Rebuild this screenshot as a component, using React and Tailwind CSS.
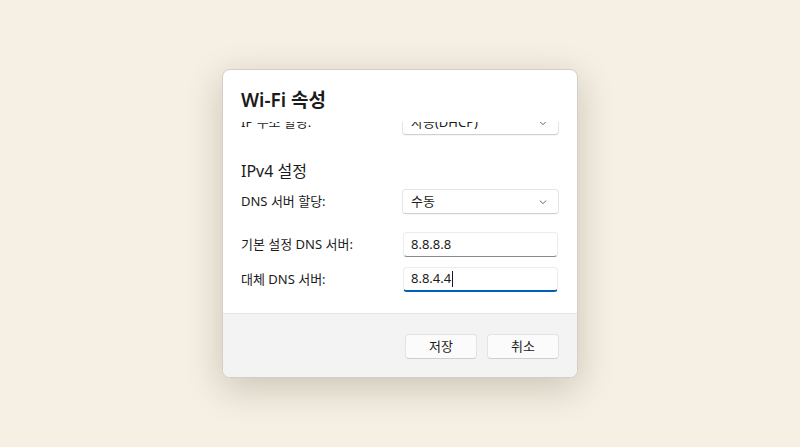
import React from "react";

const font = { fontFamily: '"Noto Sans", "Noto Sans CJK KR", sans-serif' };

// 드롭다운 버튼 (Fluent 스타일 콤보박스)
const Combo = ({ value }) => (
  <div className="flex h-[25px] w-[157px] items-center justify-between rounded-[4px] border border-[#e5e5e5] border-b-[#d0d0d0] bg-white pl-[8px] pr-[10px] shadow-[0_1px_1px_rgba(0,0,0,0.04)]">
    <span className="text-[13px] text-[#1b1b1b]">{value}</span>
    <svg width="10" height="10" viewBox="0 0 10 10" fill="none">
      <path d="M2 3.8 5 6.6 8 3.8" stroke="#6b6b6b" strokeWidth="1" strokeLinecap="round" strokeLinejoin="round" />
    </svg>
  </div>
);

const Field = ({ value, focused }) => (
  <div
    className={`mr-[1px] flex h-[25px] w-[155px] items-center rounded-[4px] border border-[#ececec] bg-white pl-[7px] ${
      focused ? "border-b-2 border-b-[#005fb8]" : "border-b-[#8a8a8a]"
    }`}
  >
    <span className="text-[13px] text-[#1b1b1b]">{value}</span>
    {focused && <span className="ml-[1px] h-[16px] w-px bg-[#1b1b1b]" />}
  </div>
);

const Row = ({ label, children, className = "" }) => (
  <div className={`flex items-center justify-between ${className}`}>
    <span className="text-[13px] text-[#1b1b1b]">{label}</span>
    {children}
  </div>
);

export default function App() {
  return (
    <div style={font} className="flex h-[447px] w-full items-center justify-center bg-[#f5efe4]">
      <div className="flex h-[309px] w-[356px] flex-col overflow-hidden rounded-[8px] border border-[#d3cfc8] bg-white shadow-[0_10px_36px_rgba(60,45,20,0.22)]">
        {/* 제목 */}
        <div className="h-[52px] shrink-0 pl-[18px] pt-[18px]">
          <h1 className="text-[19px] font-semibold leading-[24px] text-[#1b1b1b]">Wi-Fi 속성</h1>
        </div>

        {/* 스크롤되는 설정 영역 */}
        <div className="h-[191px] shrink-0 overflow-hidden pl-[18px] pr-[18px]">
          <div className="-mt-[12px]">
            <Row label="IP 주소 할당:">
              <Combo value="자동(DHCP)" />
            </Row>

            <h2 className="mt-[25px] text-[16px] leading-[22px] text-[#1b1b1b]">IPv4 설정</h2>

            <Row label="DNS 서버 할당:" className="mt-[7px]">
              <Combo value="수동" />
            </Row>

            <Row label="기본 설정 DNS 서버:" className="mt-[18px]">
              <Field value="8.8.8.8" />
            </Row>

            <Row label="대체 DNS 서버:" className="mt-[10px]">
              <Field value="8.8.4.4" focused />
            </Row>
          </div>
        </div>

        {/* 하단 버튼 */}
        <div className="flex flex-1 justify-end gap-[10px] border-t border-[#e5e5e5] bg-[#f3f3f3] pr-[18px] pt-[20px]">
          <button className="h-[25px] w-[72px] rounded-[4px] border border-[#e3e3e3] border-b-[#cfcfcf] bg-[#fbfbfb] text-[13px] text-[#1b1b1b]">
            저장
          </button>
          <button className="h-[25px] w-[72px] rounded-[4px] border border-[#e3e3e3] border-b-[#cfcfcf] bg-[#fbfbfb] text-[13px] text-[#1b1b1b]">
            취소
          </button>
        </div>
      </div>
    </div>
  );
}
